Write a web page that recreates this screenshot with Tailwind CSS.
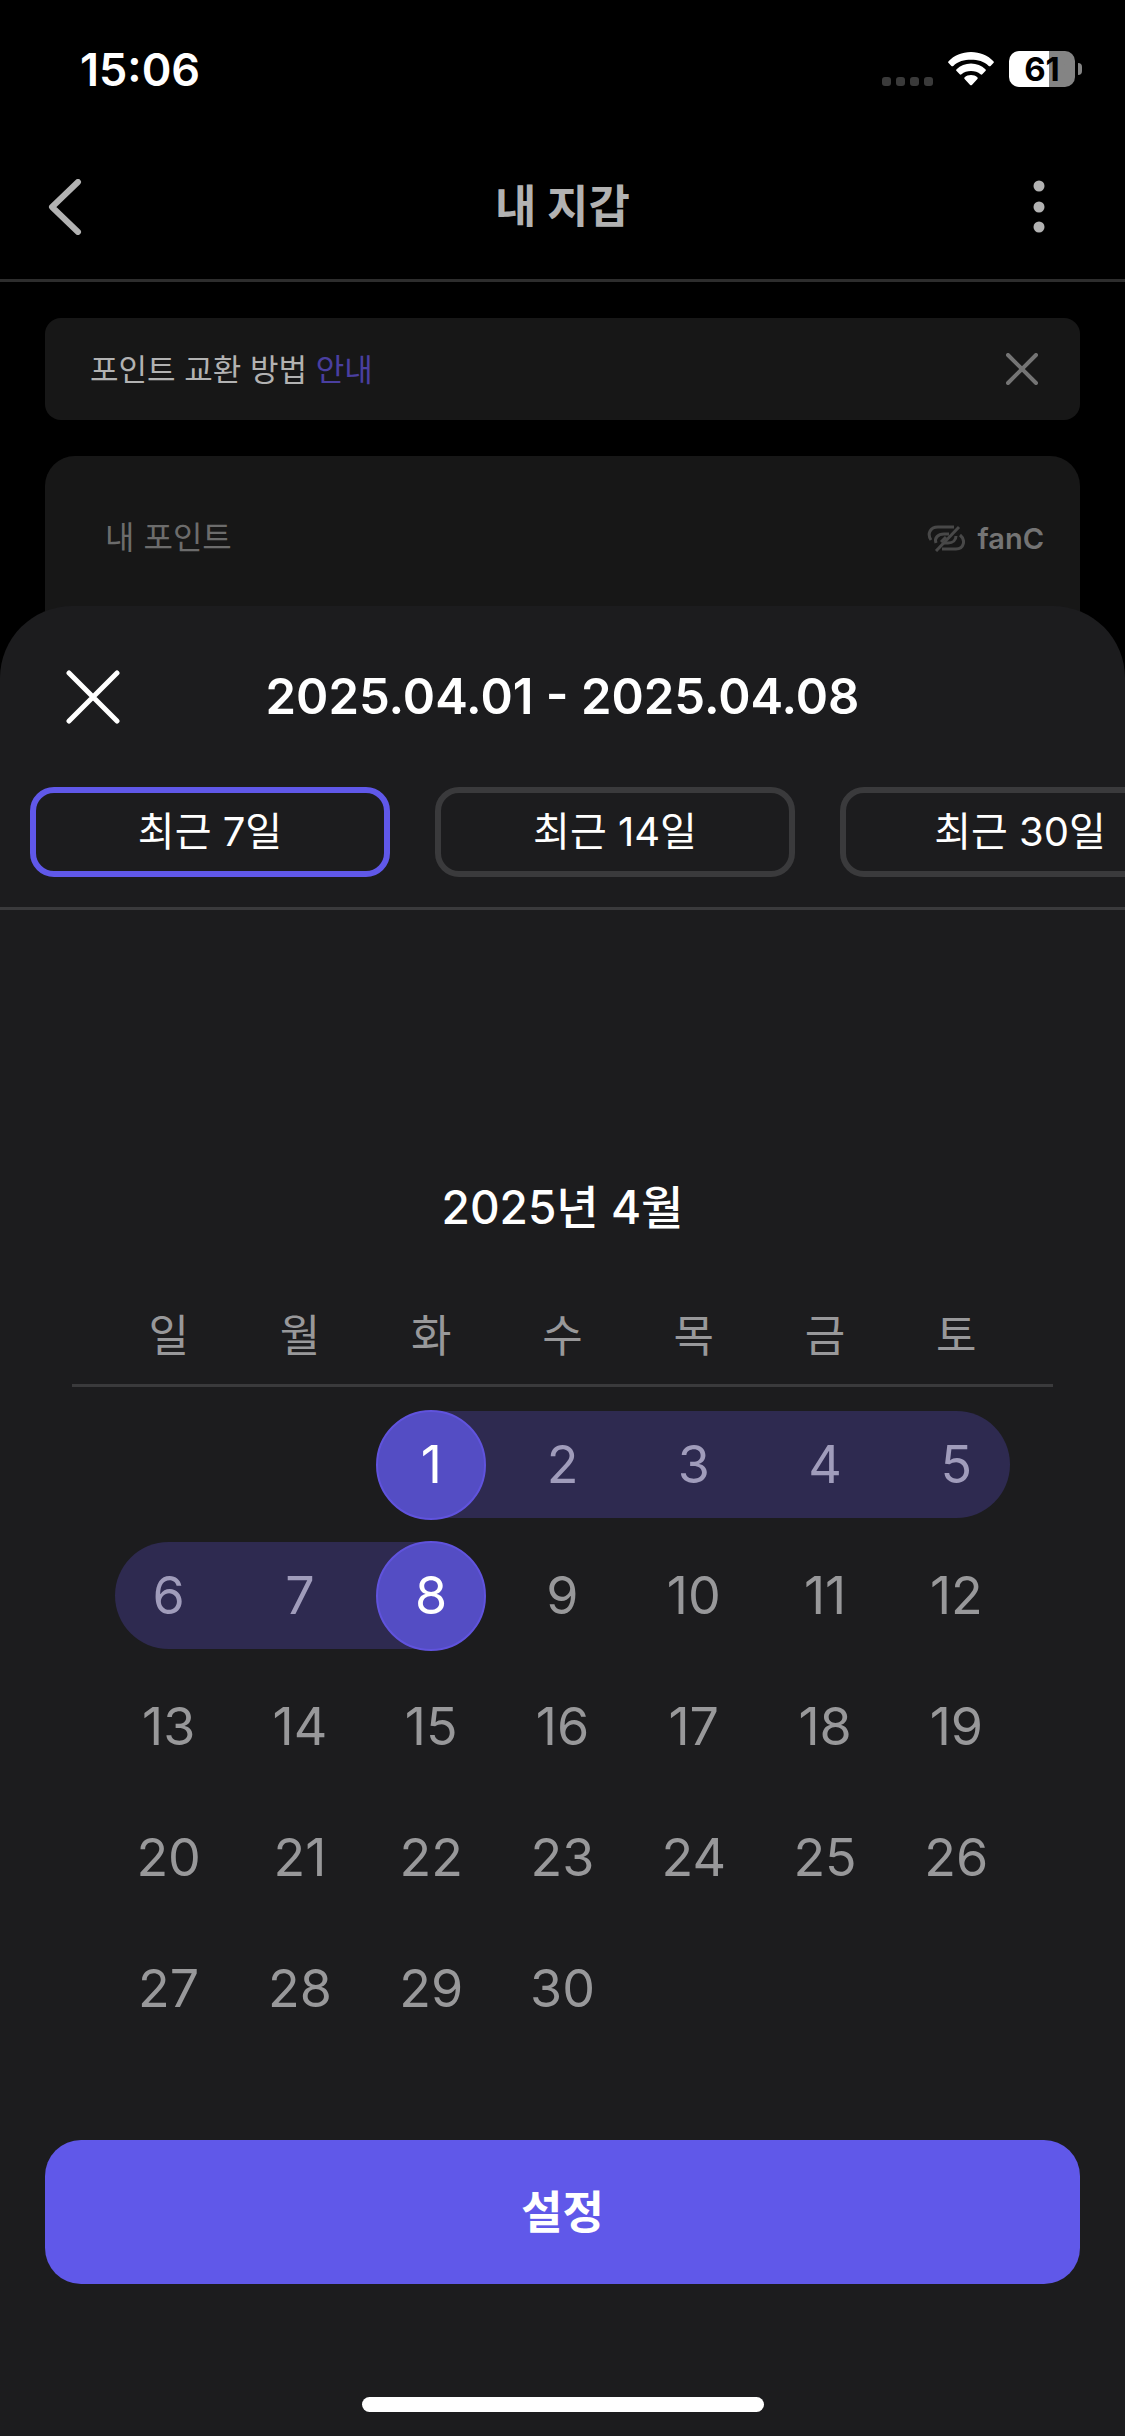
<!DOCTYPE html>
<html lang="ko">
<head>
<meta charset="utf-8">
<meta name="viewport" content="width=device-width, initial-scale=1">
<title>내 지갑</title>
<script src="https://cdn.jsdelivr.net/npm/@tailwindcss/browser@4"></script>
</head>
<body class="flex min-h-screen flex-col overflow-x-hidden bg-black font-[Inter,'Noto_Sans_CJK_KR',sans-serif] text-white">

<!-- Status bar -->
<div class="flex h-[138px] shrink-0 items-center justify-between pl-20 pr-[43px]">
  <time class="text-[45px] leading-none font-semibold">15:06</time>
  <div class="flex items-center gap-[15px]">
    <svg class="mt-6 h-[9px] w-[51px]" viewBox="0 0 51 9" fill="#3a3a3a" aria-hidden="true"><rect width="9" height="9" rx="3"/><rect x="14" width="9" height="9" rx="3"/><rect x="28" width="9" height="9" rx="3"/><rect x="42" width="9" height="9" rx="3"/></svg>
    <svg class="h-[34px] w-[46px]" viewBox="0 0 46 34" fill="#fff" aria-hidden="true">
      <path d="M23 0C14 0 6 3.500 .6 9.200c-.6.600-.6 1.300 0 1.900l2.800 2.800c.6.600 1.300.6 1.900 0C10 9.300 16.200 7.800 23 7.800s13 1.500 17.700 6.100c.6.600 1.300.6 1.900 0l2.800-2.800c.6-.6.600-1.300 0-1.900C40 3.500 32 0 23 0z"/>
      <path d="M23 11.500c-5.600 0-10.600 2.100-14.400 5.700-.6.600-.6 1.300 0 1.900l3.100 3.100c.6.600 1.200.6 1.800 0C16 19.900 19.300 19 23 19s7 .9 9.500 3.200c.6.600 1.200.6 1.800 0l3.100-3.100c.6-.6.600-1.300 0-1.900-3.800-3.600-8.800-5.700-14.400-5.700z"/>
      <path d="M23 23c-2.500 0-4.700.9-6.300 2.300-.6.500-.6 1.200-.1 1.700l5.500 5.900c.5.600 1.300.6 1.800 0l5.500-5.900c.5-.5.500-1.200-.1-1.700C27.700 23.900 25.500 23 23 23z"/>
    </svg>
    <div class="flex items-center gap-[3px]">
      <div class="flex h-9 w-[66px] items-center justify-center rounded-[10px] bg-linear-to-r from-white from-61% to-[#848484] to-61% text-[33px] leading-none font-bold text-black">61</div>
      <div class="h-3 w-1 rounded-r-full bg-[#848484]"></div>
    </div>
  </div>
</div>

<!-- App header -->
<header class="grid h-36 shrink-0 grid-cols-3 items-center border-b-[3px] border-[#2d2d2d] px-12 pb-1 text-[#b2b2b2]">
  <button type="button" aria-label="뒤로" class="justify-self-start">
    <svg class="h-14 w-[34px]" viewBox="0 0 34 56" fill="none" stroke="currentColor" stroke-width="6" stroke-linecap="round" stroke-linejoin="round"><path d="M30 3 4 28l26 25"/></svg>
  </button>
  <h1 class="text-center text-[45px] leading-none font-bold">내 지갑</h1>
  <button type="button" aria-label="더보기" class="justify-self-end pr-8">
    <svg class="h-[54px] w-3" viewBox="0 0 12 54" fill="currentColor"><circle cx="6" cy="6" r="5.500"/><circle cx="6" cy="27" r="5.500"/><circle cx="6" cy="47" r="5.500"/></svg>
  </button>
</header>

<main class="flex shrink-0 flex-col gap-9 px-[45px] pt-9">
  <div class="flex h-[102px] items-center justify-between rounded-2xl bg-[#171717] pr-[42px] pl-[45px]">
    <p class="text-[31px] leading-none text-[#b2b2b2]">포인트 교환 방법 <a href="#guide" class="text-[#4a3fa0]">안내</a></p>
    <button type="button" aria-label="안내 닫기">
      <svg class="size-8" viewBox="0 0 32 32" fill="none" stroke="#747474" stroke-width="4" stroke-linecap="round"><path d="M2 2l28 28M30 2 2 30"/></svg>
    </button>
  </div>
  <section class="h-[225px] rounded-t-[30px] bg-[#171717] pt-[62px] pr-9 pl-15">
    <div class="flex h-10 items-center justify-between">
      <h2 class="text-[32px] leading-none text-[#6c6c6c]">내 포인트</h2>
      <div class="flex items-center gap-3">
        <svg class="h-7 w-[38px]" viewBox="0 0 38 28" fill="none" stroke="#484848" stroke-width="3" aria-hidden="true"><path d="M27 3H11C3 3 0 10 4 16"/><path d="M15 25h14c8 0 10-9 4-14"/><path d="M32 3 9 27"/><path d="M9 19C7 14 11 10 17 10h5M14 18l5-5M17 19h4c5 0 8-3 8-7"/></svg>
        <span class="text-[29px] leading-none font-semibold text-[#747474]">fanC</span>
      </div>
    </div>
  </section>
</main>

<!-- Date range sheet -->
<section role="dialog" aria-label="기간 선택" class="-mt-[75px] flex grow flex-col items-center rounded-t-[72px] bg-[#1c1c1e]">
  <header class="grid h-[181px] w-full grid-cols-[54px_1fr_54px] items-center px-[66px]">
    <button type="button" aria-label="닫기">
      <svg class="size-[54px]" viewBox="0 0 54 54" fill="none" stroke="#fff" stroke-width="5" stroke-linecap="round"><path d="M3 3l48 48M51 3 3 51"/></svg>
    </button>
    <h2 class="text-center text-[49px] leading-none font-semibold">2025.04.01 - 2025.04.08</h2>
  </header>

  <div class="flex w-full gap-[45px] overflow-hidden border-b-[3px] border-[#3a3a3c] px-[30px] pb-[30px] text-[40px] leading-none">
    <button type="button" aria-pressed="true" class="h-[90px] w-[360px] shrink-0 rounded-[24px] border-6 border-[#6058e9]">최근 7일</button>
    <button type="button" aria-pressed="false" class="h-[90px] w-[360px] shrink-0 rounded-[24px] border-6 border-[#3a3a3c]">최근 14일</button>
    <button type="button" aria-pressed="false" class="h-[90px] w-[360px] shrink-0 rounded-[24px] border-6 border-[#3a3a3c]">최근 30일</button>
  </div>

  <div class="w-full px-[103px] pt-[267px]">
    <h3 id="month" class="text-center text-[46px] leading-[60px] font-medium">2025년 4월</h3>
    <table id="days" aria-labelledby="month" class="mt-[48px] w-full table-fixed text-[52px] leading-none text-[#98989a]">
      <thead class="relative text-[44px] after:absolute after:-inset-x-[31px] after:bottom-0 after:h-[3px] after:bg-[#3a3a3c]">
        <tr>
          <th scope="col" class="h-[102px] p-0 font-normal">일</th>
          <th scope="col" class="p-0 font-normal">월</th>
          <th scope="col" class="p-0 font-normal">화</th>
          <th scope="col" class="p-0 font-normal">수</th>
          <th scope="col" class="p-0 font-normal">목</th>
          <th scope="col" class="p-0 font-normal">금</th>
          <th scope="col" class="p-0 font-normal">토</th>
        </tr>
      </thead>
      <tbody class="before:block before:h-3"></tbody>
    </table>
  </div>

  <div class="mt-auto w-full px-[45px] pb-[113px]">
    <button type="button" class="h-36 w-full rounded-[36px] bg-[#6058e9] text-[45px] leading-none font-bold">설정</button>
  </div>
  <div class="mb-6 h-[15px] w-[402px] rounded-full bg-white"></div>
</section>

<script>
  // April 2025 starts on a Tuesday; the 1st to the 8th is the selected range.
  const body = document.querySelector('#days tbody');
  const first = 2, total = 30, from = 1, to = 8;
  for (let week = 0; week < 5; week++) {
    const tr = body.insertRow();
    for (let col = 0; col < 7; col++) {
      const td = tr.insertCell();
      td.className = 'h-[131px] p-0';
      const day = week * 7 + col - first + 1;
      if (day < 1 || day > total) continue;
      let band = 'flex h-[107px] items-center justify-center';
      if (day >= from && day <= to) {
        band += ' bg-[#2e2a50] text-[#a09cbb]';
        if (day === from) band += ' ml-[50%] rounded-l-none';
        if (day === to) band += ' mr-[50%]';
        if (col === 0) band += ' ml-3 rounded-l-full pr-3';
        if (col === 6) band += ' mr-3 rounded-r-full pl-3';
      }
      const div = document.createElement('div');
      div.className = band;
      const button = document.createElement('button');
      button.type = 'button';
      button.textContent = day;
      button.className = 'size-[110px] shrink-0 rounded-full';
      if (day === from) button.className += ' -ml-[100%] border-2 border-[#6053dd] bg-[#544dc4] text-white';
      if (day === to) button.className += ' -mr-[100%] border-2 border-[#6053dd] bg-[#544dc4] text-white';
      div.append(button);
      td.append(div);
    }
  }
</script>
</body>
</html>
